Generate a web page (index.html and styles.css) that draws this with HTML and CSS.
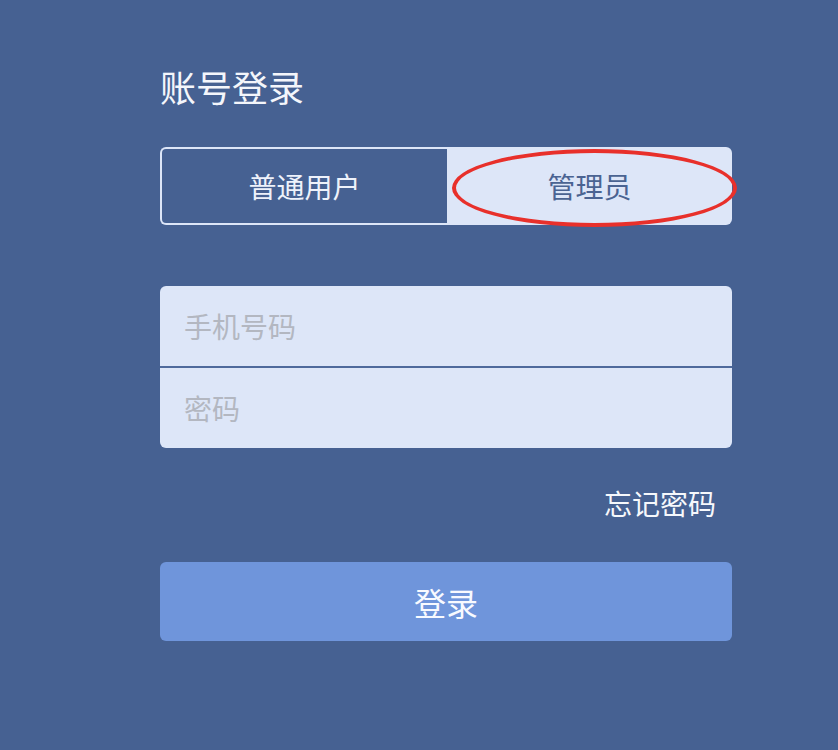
FILE: index.html
```html
<!DOCTYPE html>
<html lang="zh">
<head>
<meta charset="utf-8">
<title>账号登录</title>
<link rel="stylesheet" href="styles.css">
</head>
<body>
<div class="page">
  <h1 class="title">账号登录</h1>
  <div class="toggle">
    <div class="tab tab-user">普通用户</div>
    <div class="tab tab-admin">管理员</div>
    <div class="mark"></div>
  </div>
  <div class="fields">
    <div class="field"><input class="input" type="text" placeholder="手机号码"></div>
    <div class="divider"></div>
    <div class="field"><input class="input" type="password" placeholder="密码"></div>
  </div>
  <div class="forgot">忘记密码</div>
  <button class="submit" type="button">登录</button>
</div>
</body>
</html>
```

FILE: styles.css
```css
html, body {
  margin: 0;
  padding: 0;
  background: #466192;
  font-family: "Noto Sans CJK SC", "Noto Sans", sans-serif;
}
.page {
  width: 572px;
  padding: 66px 0 0 160px;
}
.title {
  margin: 0 0 41px 0;
  height: 40px;
  line-height: 40px;
  font-size: 36px;
  font-weight: 400;
  color: #f4f6fb;
}
.toggle {
  position: relative;
  display: flex;
  height: 78px;
  border-radius: 6px;
}
.tab {
  flex: 1;
  display: flex;
  align-items: center;
  justify-content: center;
  font-size: 28px;
}
.tab-user {
  color: #eef2fb;
  border: 2px solid #dde6f8;
  border-right: none;
  border-radius: 6px 0 0 6px;
}
.tab-admin {
  color: #4a6392;
  background: #dde6f8;
  border-radius: 0 6px 6px 0;
}
.mark {
  position: absolute;
  left: 292px;
  top: 2px;
  width: 277px;
  height: 70px;
  border: 4px solid #e8302b;
  border-radius: 50%;
}
.fields {
  margin-top: 61px;
  background: #dde6f8;
  border-radius: 6px;
  overflow: hidden;
}
.field {
  height: 80px;
  display: flex;
  align-items: center;
  padding: 0 24px;
}
.divider {
  height: 2px;
  background: #4f6a9c;
}
.input {
  width: 100%;
  border: none;
  outline: none;
  background: transparent;
  font-family: inherit;
  font-size: 28px;
  color: #333;
  padding: 0;
}
.input::placeholder {
  color: #b3b7c1;
}
.forgot {
  margin-top: 35px;
  height: 40px;
  line-height: 40px;
  text-align: right;
  padding-right: 16px;
  font-size: 28px;
  color: #f6f8fc;
}
.submit {
  display: block;
  margin-top: 39px;
  width: 572px;
  height: 79px;
  border: none;
  border-radius: 6px;
  background: #6f95db;
  color: #f8faff;
  font-family: inherit;
  font-size: 32px;
}
```
